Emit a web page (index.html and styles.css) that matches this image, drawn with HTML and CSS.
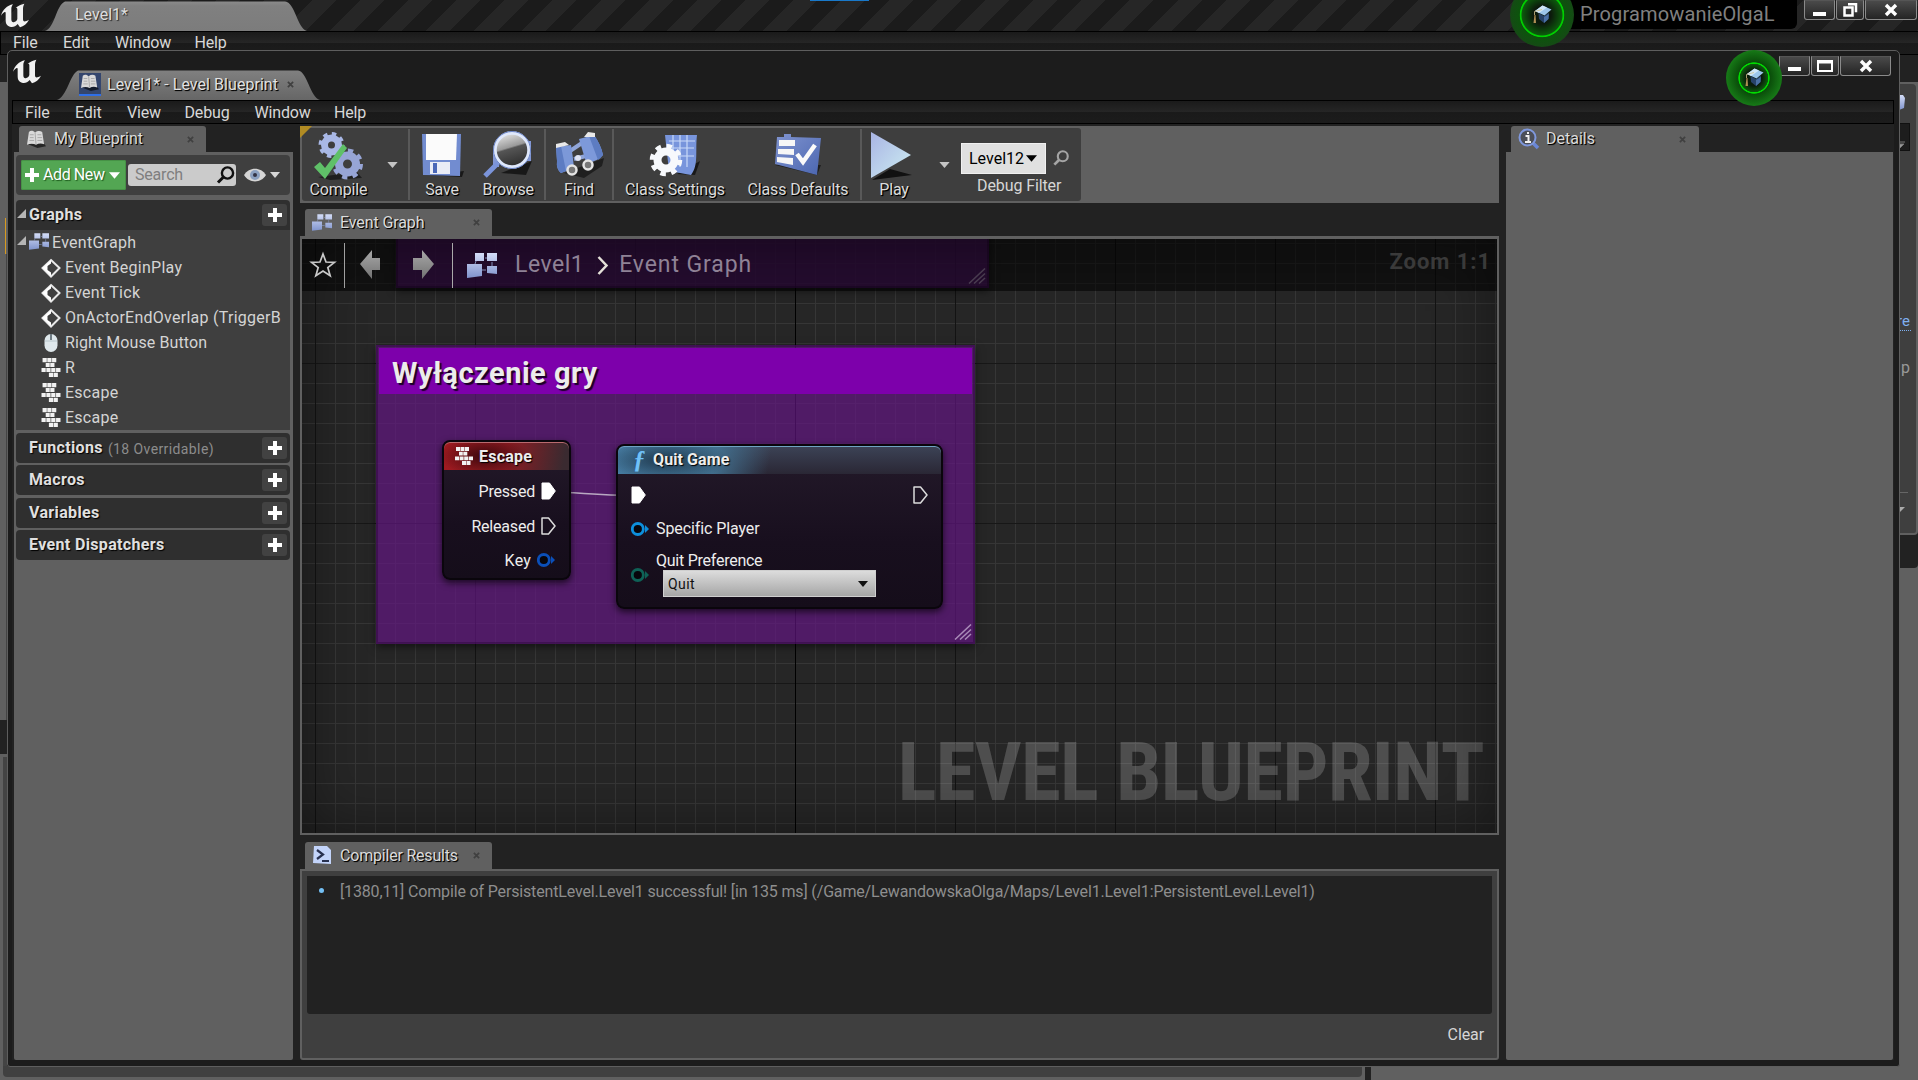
FILE: index.html
```html
<!DOCTYPE html>
<html lang="en">
<head>
<meta charset="utf-8">
<title>Level1* - Level Blueprint</title>
<link rel="stylesheet" href="styles.css">
</head>
<body>
<svg class="defs" width="0" height="0">
  <defs>
    <linearGradient id="gBlue" x1="0" y1="0" x2="0" y2="1"><stop offset="0" stop-color="#d4ddf8"/><stop offset="1" stop-color="#7f93cc"/></linearGradient>
    <linearGradient id="gDeep" x1="0" y1="0" x2="1" y2="1"><stop offset="0" stop-color="#8094d0"/><stop offset="1" stop-color="#4b66b0"/></linearGradient>
    <linearGradient id="gPlay" x1="0" y1="0" x2="1" y2="1"><stop offset="0" stop-color="#a9b4e4"/><stop offset="1" stop-color="#cdeef2"/></linearGradient>
    <linearGradient id="gLens" x1="0" y1="0" x2=".3" y2="1"><stop offset="0" stop-color="#f4f4f4"/><stop offset=".5" stop-color="#9a9a9a"/><stop offset=".55" stop-color="#555"/><stop offset="1" stop-color="#333"/></linearGradient>
    <linearGradient id="gTab" x1="0" y1="0" x2="0" y2="1"><stop offset="0" stop-color="#8b8b8b"/><stop offset=".15" stop-color="#808080"/><stop offset="1" stop-color="#7c7c7c"/></linearGradient>
    <linearGradient id="gTab2" x1="0" y1="0" x2="0" y2="1"><stop offset="0" stop-color="#808080"/><stop offset="1" stop-color="#666"/></linearGradient>
    <linearGradient id="gArrow" x1="0" y1="0" x2="0" y2="1"><stop offset="0" stop-color="#a8a8a8"/><stop offset="1" stop-color="#727272"/></linearGradient>
  </defs>
  <symbol id="unreal" viewBox="0 0 90 90"><path fill="#f2f2f2" d="M3 47C8 29 21 17 39 13C35 18 34 22 34 28V58C34 65 38 68 43 66C48 64 52 60 52 56V28C52 24 50 22 46 24C53 18 62 14 73 11C70 17 69 22 69 28V58C69 66 75 66 87 59C81 71 71 79 60 82L53 72C47 79 38 83 30 80C20 77 17 71 17 60V40C17 33 11 35 3 47Z"/></symbol>
  <symbol id="book" viewBox="0 0 22 20"><path d="M2 15l10 4 9-2-3-4z" fill="#000" opacity=".6"/><path fill="#d9d9d9" d="M3 2C5 0 8 1 9.500 2.500C12 .5 15 .5 17 2L19 15C16 13.500 13 14 10.500 15.500C8 14 4 14 1 15.500z"/><path d="M9.500 2.500L10.500 15M4 5h4M4 8h4M3.500 11h5M12 5h4M12 8h5M12 11h5" stroke="#a6a6a6" stroke-width="1" fill="none"/></symbol>
  <symbol id="graph" viewBox="0 0 30 25"><path d="M9 8L8 11M18 5h2M14 17h5M25 9v4" stroke="#8591bb" fill="none"/><path fill="url(#gBlue)" d="M8 0h9v8H8zM20 0h10v8H20zM0 11h15v12l-15 2zM20 13h10v8l-10-1z"/></symbol>
  <symbol id="plus" viewBox="0 0 14 14"><path fill="#fff" d="M5 0h4v5h5v4H9v5H5V9H0V5h5z"/></symbol>
  <symbol id="close" viewBox="0 0 8 8"><path d="M1 1L7 7M7 1L1 7" stroke="#404040" stroke-width="2"/></symbol>
  <symbol id="down" viewBox="0 0 12 7"><path d="M0 0h12L6 7z" fill="currentColor"/></symbol>
  <symbol id="event" viewBox="0 0 20 20"><path fill="none" stroke="#e8e8e8" stroke-width="2" d="M10 2L18.500 10L10 18.500L1.500 10z"/><path fill="#fff" d="M10 2L1.500 10L10 18v-3.500L6.500 12V8L10 5.500z"/></symbol>
  <symbol id="mouse" viewBox="0 0 20 20"><rect x="3.500" y="1" width="13" height="18" rx="6.500" fill="#dfe8ec"/><path d="M10 1v6" stroke="#6f7c84" stroke-width="2"/><path d="M4 8h12" stroke="#b8c6cc"/></symbol>
  <symbol id="keys" viewBox="0 0 18 18"><path fill="#f2f2f2" d="M1 0h4v4H1zM5.500 0h4v4h-4zM10 0h4v4h-4zM4 4.700h3.800v3.800H4zM8.300 4.700h4v3.800h-4zM0 9.400h4v3.800H0zM4.600 9.400h4v3.800h-4zM9.200 9.400h4v3.800h-4zM13.800 9.400H18v3.800h-4.200zM7 14h4v4H7zM11.500 14h4v4h-4z"/></symbol>
  <symbol id="glass" viewBox="0 0 18 18"><circle cx="11" cy="7" r="5.600" fill="none" stroke="currentColor" stroke-width="2.400"/><path d="M7 11L1.500 16.500" stroke="currentColor" stroke-width="3"/></symbol>
  <symbol id="execOn" viewBox="0 0 15 18"><path fill="#fff" stroke="#fff" stroke-linejoin="round" d="M1 1h7.500L14.300 9L8.500 17H1z"/></symbol>
  <symbol id="execOff" viewBox="0 0 15 18"><path fill="none" stroke="#dcdcdc" stroke-width="1.500" stroke-linejoin="round" d="M1 1h6.500L14 9L7.500 17H1z"/></symbol>
  <symbol id="pin" viewBox="0 0 18 14"><circle cx="6.800" cy="7" r="5.500" fill="#07060c" stroke="currentColor" stroke-width="2.800"/><path fill="currentColor" d="M14 3L18 7L14 11z"/></symbol>
  <symbol id="grip" viewBox="0 0 18 16"><path stroke="currentColor" stroke-width="1.500" d="M1 15.500L17 .5M6 15.500L17 5.500M11 15.500L17 10"/></symbol>
  <symbol id="cap" viewBox="0 0 20 20"><path fill="#274268" d="M6.500 8L12 11L17 7.500L16.500 14L12 18L7 14z"/><path fill="#4a70a4" d="M12 12L16.800 9L16.500 14L12 18z"/><path fill="#9cc6ea" d="M10.500 .5L19.500 4.500L12.500 10.500L3 6z"/><path fill="#cfe6f7" d="M10.500 .5L15 2.500L7 8L3 6z"/><path d="M10 4.500L2.500 6.500V10" stroke="#cfc08c" stroke-width=".8" fill="none"/><path d="M2.500 10L1.500 18H4L3.500 10z" fill="#b08f54"/></symbol>
</svg>

<div class="editor">
  <header class="ed-title">
    <svg class="ed-logo"><use href="#unreal"/></svg>
    <div class="ed-tab">
      <svg class="tab-shape" viewBox="0 0 262 30" preserveAspectRatio="none"><path fill="url(#gTab)" d="M0 30C10 27 11 4 20 0.500H240C250 1 252 27 262 30z"/></svg>
      <span class="t">Level1*</span>
    </div>
    <div class="ed-project"><span>ProgramowanieOlgaL</span></div>
    <div class="tutorial big"><svg width="20" height="20"><use href="#cap"/></svg></div>
    <div class="winbtns ed-btns">
      <i class="w31"><svg width="14" height="14"><path d="M0 9h13v4H0z" fill="#fff"/></svg></i>
      <i class="w28"><svg width="14" height="14"><path d="M5 1.200h8v8M1.500 4.500h8v8h-8z" fill="none" stroke="#fff" stroke-width="2.500"/></svg></i>
      <i class="w51"><svg width="14" height="14"><path d="M2 2L12 12M12 2L2 12" stroke="#fff" stroke-width="3.400"/></svg></i>
    </div>
  </header>
  <nav class="menu ed-menu"><span class="m50">File</span><span class="m52">Edit</span><span class="m80">Window</span><span>Help</span></nav>
  <div class="ed-body">
    <div class="ed-left"><i class="l1"></i><i class="l2"></i><i class="l3"></i><i class="l4"></i><i class="l5"></i><i class="l6"></i></div>
    <div class="ed-right">
      <div class="ed-details">
        <svg class="ed-chip" width="6" height="15"><path d="M0 0h4l2 3-1 10-5 2z" fill="url(#gBlue)"/></svg>
        <div class="ed-drop"><svg width="6" height="7"><path d="M0 0h6M0 7V2h5z" stroke="#777" fill="#999"/></svg></div>
        <div class="ed-link">re</div>
        <div class="ed-word">p</div>
        <div class="ed-rule"></div>
        <svg class="ed-arrow" width="6" height="6"><path d="M0 0h6L0 6z" fill="#aaa"/></svg>
      </div>
    </div>
  </div>
  <footer class="ed-bottom"><div class="ed-content"></div><div class="ed-gap"></div></footer>
  <div class="top-marker"></div>
</div>

<section class="window">
  <header class="w-title">
    <svg class="w-logo"><use href="#unreal"/></svg>
    <div class="w-tab">
      <svg class="tab-shape" viewBox="0 0 263 30" preserveAspectRatio="none"><path fill="url(#gTab2)" d="M0 30C10 27 13 4 21 0.500H241C250 1 253 27 263 30z"/></svg>
      <span class="w-tabicon"><svg width="20" height="18"><use href="#book"/></svg></span>
      <span class="t s">Level1* - Level Blueprint</span>
      <svg class="x" width="7" height="7"><use href="#close"/></svg>
    </div>
    <div class="tutorial"><svg width="20" height="20"><use href="#cap"/></svg></div>
    <div class="winbtns">
      <i class="w31"><svg width="14" height="14"><path d="M0 8h13v4H0z" fill="#fff"/></svg></i>
      <i class="w28"><svg width="16" height="12"><path d="M1 1h14v10H1z" fill="none" stroke="#fff" stroke-width="2"/><path d="M0 2h16" stroke="#fff" stroke-width="3"/></svg></i>
      <i class="w51"><svg width="14" height="14"><path d="M2 2L12 12M12 2L2 12" stroke="#fff" stroke-width="3.400"/></svg></i>
    </div>
  </header>
  <nav class="menu w-menu"><span class="m50">File</span><span class="m52">Edit</span><span class="m58">View</span><span class="m70">Debug</span><span class="m80">Window</span><span>Help</span></nav>

  <div class="columns">
    <aside class="col-left">
      <div class="tab"><svg class="ti" width="21" height="19"><use href="#book"/></svg><span class="t s">My Blueprint</span><svg class="x" width="7" height="7"><use href="#close"/></svg></div>
      <div class="panel bp">
        <div class="bp-tools">
          <button class="add"><svg width="14" height="14"><use href="#plus"/></svg><span>Add New</span><svg width="11" height="7"><use href="#down"/></svg></button>
          <div class="search"><span>Search</span><svg width="19" height="18"><use href="#glass"/></svg></div>
          <svg class="eye" width="22" height="14" viewBox="0 0 22 14"><path d="M0 7C5-1.500 17-1.500 22 7C17 15.500 5 15.500 0 7z" fill="#d6d6d6"/><circle cx="11" cy="7" r="5" fill="#8ba0c0"/><circle cx="11" cy="7" r="2" fill="#334"/></svg>
          <svg class="eye-d" width="10" height="6"><use href="#down"/></svg>
        </div>
        <div class="cat open"><svg class="tri" width="9" height="9"><path d="M9 0V9H0z" fill="#b5b5b5"/></svg><b>Graphs</b><em><svg width="14" height="14"><use href="#plus"/></svg></em></div>
        <ul class="tree">
          <li class="root"><svg class="tri" width="9" height="9"><path d="M9 0V9H0z" fill="#b5b5b5"/></svg><svg width="20" height="17" class="gi"><use href="#graph"/></svg><span>EventGraph</span></li>
          <li><svg width="20" height="20"><use href="#event"/></svg><span>Event BeginPlay</span></li>
          <li><svg width="20" height="20"><use href="#event"/></svg><span>Event Tick</span></li>
          <li><svg width="20" height="20"><use href="#event"/></svg><span>OnActorEndOverlap (TriggerB</span></li>
          <li><svg width="20" height="20"><use href="#mouse"/></svg><span class="n">Right Mouse Button</span></li>
          <li><svg width="20" height="19"><use href="#keys"/></svg><span>R</span></li>
          <li><svg width="20" height="19"><use href="#keys"/></svg><span>Escape</span></li>
          <li><svg width="20" height="19"><use href="#keys"/></svg><span>Escape</span></li>
        </ul>
        <div class="cat"><b>Functions</b><small>(18 Overridable)</small><em><svg width="14" height="14"><use href="#plus"/></svg></em></div>
        <div class="cat"><b>Macros</b><em><svg width="14" height="14"><use href="#plus"/></svg></em></div>
        <div class="cat"><b>Variables</b><em><svg width="14" height="14"><use href="#plus"/></svg></em></div>
        <div class="cat"><b>Event Dispatchers</b><em><svg width="14" height="14"><use href="#plus"/></svg></em></div>
      </div>
    </aside>

    <main class="col-mid">
      <div class="toolbar">
        <div class="tools">
          <div class="tool c1"><svg width="50" height="50" viewBox="0 0 50 50">
            <path d="M4 46l12 3 32-2-5-6z" fill="#000" opacity=".5"/>
            <circle cx="17.500" cy="14" r="7" fill="none" stroke="#a9b8e6" stroke-width="7"/><circle cx="17.500" cy="14" r="11" fill="none" stroke="#a9b8e6" stroke-width="4" stroke-dasharray="4.300 4.340"/>
            <circle cx="33.500" cy="33" r="8.500" fill="none" stroke="#97a5d6" stroke-width="8"/><circle cx="33.500" cy="33" r="13.500" fill="none" stroke="#97a5d6" stroke-width="4" stroke-dasharray="5.300 5.300"/>
            <path d="M0 36L6 31L11 37L29 13L33 17L11 48z" fill="#5fc068"/></svg><label>Compile</label></div>
          <div class="arr a1"><svg width="11" height="6"><use href="#down"/></svg></div>
          <i class="sep"></i>
          <div class="tool c2"><svg width="46" height="50" viewBox="0 0 46 50"><path d="M5 44l38 2 2-6z" fill="#000" opacity=".6"/><path d="M3 3H42L41 45L4 44z" fill="#728cd0"/><path d="M7 3H38L37 29H7z" fill="#fbfbfb"/><path d="M11 31H31V43H11z" fill="#e9ecf6"/><path d="M14 32h4v10h-4z" fill="#4a67b8"/></svg><label>Save</label></div>
          <div class="tool c3"><svg width="50" height="50" viewBox="0 0 50 50"><path d="M18 42l25 2 6-14z" fill="#000" opacity=".6"/><path d="M10 18h6v18h-6zM40 10h8v20h-8z" fill="#8297d4"/><path d="M15 32L2 45" stroke="#7b94da" stroke-width="5"/><circle cx="29" cy="19" r="17" fill="url(#gLens)" stroke="#dfe8fb" stroke-width="3.500"/><circle cx="29" cy="19" r="18.500" fill="none" stroke="#6a84c8" stroke-width="1"/></svg><label>Browse</label></div>
          <i class="sep"></i>
          <div class="tool c4"><svg width="50" height="50" viewBox="0 0 50 50"><path d="M10 42l20 5 18-12 2-8z" fill="#000" opacity=".5"/><path d="M16 20L28 12M20 28L32 25" stroke="#90a5d8" stroke-width="4"/><path d="M2 16L17 14Q19 26 20 37L7 42Q2 38 3 30z" fill="#7c98d8"/><path d="M25 8L40 4Q47 14 49 24Q42 32 32 31z" fill="#7d99da"/><path d="M7 42Q2 38 3 30L2 16L7 15L12 40zM44 29Q47 27 49 24Q47 14 40 4L35 5z" fill="#5d7cc2"/><path d="M2 17v-4l9-2 4 3zM30 6l4-5 7 1v4z" fill="#e9e9e9"/><circle cx="18" cy="39" r="4.500" fill="#777" stroke="#e4e4e4" stroke-width="2.500"/><circle cx="34" cy="34" r="4.500" fill="#777" stroke="#e4e4e4" stroke-width="2.500"/><circle cx="24" cy="27" r="3" fill="#dfe4f4"/></svg><label>Find</label></div>
          <i class="sep"></i>
          <div class="tool c5"><svg width="52" height="50" viewBox="0 0 52 50"><path d="M28 43l18 1 5-14z" fill="#000" opacity=".6"/><path d="M16 4H48C46 20 50 34 42 44L20 40z" fill="#7895dc"/><path d="M20 10H46M20 17H45M24 4V20M31 4V36M38 4V36M20 25H45" stroke="#c9daf8" stroke-width="1.200" fill="none"/><circle cx="17" cy="29" r="8.500" fill="none" stroke="#f7f9fc" stroke-width="8"/><circle cx="17" cy="29" r="14" fill="none" stroke="#f7f9fc" stroke-width="4.500" stroke-dasharray="5.500 5.500"/></svg><label>Class Settings</label></div>
          <div class="tool c6"><svg width="50" height="50" viewBox="0 0 50 50"><path d="M2 34l42 10 4-10z" fill="#000" opacity=".5"/><path d="M4 6L11 6V3H18V6L48 7L44 44L2 33z" fill="url(#gDeep)"/><path d="M6 9H22V15H6zM5 18H21V24L5 23zM4 26L20 27V34L4 31z" fill="#f6f6f6"/><path d="M24 23L30 31L42 14" fill="none" stroke="#fafafa" stroke-width="4.500"/></svg><label>Class Defaults</label></div>
          <i class="sep"></i>
          <div class="tool c7"><svg width="46" height="50" viewBox="0 0 46 50"><path d="M2 49L42 44L20 38z" fill="#111"/><path d="M1 1L41 24L1 47z" fill="url(#gPlay)"/></svg><label>Play</label></div>
          <div class="arr a2"><svg width="11" height="6"><use href="#down"/></svg></div>
          <div class="debug">
            <div class="dbg-row"><span class="dbg-sel">Level12<svg width="11" height="7"><use href="#down"/></svg></span><svg class="dbg-find" width="16" height="16"><use href="#glass"/></svg></div>
            <span class="dbg-label">Debug Filter</span>
          </div>
        </div>
      </div>

      <div class="tab tabm"><svg class="ti" width="20" height="17"><use href="#graph"/></svg><span class="t s">Event Graph</span><svg class="x" width="7" height="7"><use href="#close"/></svg></div>
      <div class="graph">
        <div class="canvas">
          <div class="grid major"></div>
          <div class="comment upper"><svg class="grip" width="18" height="16"><use href="#grip"/></svg></div>
          <div class="comment main"><h2>Wyłączenie gry</h2><svg class="grip" width="18" height="16"><use href="#grip"/></svg></div>
          <svg class="wire" width="90" height="10"><path d="M0 3C30 3 45 6.500 86 6.500" stroke="#b9a9c2" stroke-width="1.600" fill="none"/></svg>
          <div class="node n1">
            <h3><svg width="18" height="18"><use href="#keys"/></svg><span>Escape</span></h3>
            <div class="pr p1"><span>Pressed</span><svg width="15" height="18"><use href="#execOn"/></svg></div>
            <div class="pr p2"><span>Released</span><svg width="15" height="18"><use href="#execOff"/></svg></div>
            <div class="pr p3"><span>Key</span><svg width="18" height="14"><use href="#pin"/></svg></div>
          </div>
          <div class="node n2">
            <h3><i>ƒ</i>Quit Game</h3>
            <div class="q1"><svg width="15" height="18"><use href="#execOn"/></svg><svg width="15" height="18"><use href="#execOff"/></svg></div>
            <div class="q2"><svg width="18" height="14"><use href="#pin"/></svg><span>Specific Player</span></div>
            <div class="q3"><svg width="18" height="14"><use href="#pin"/></svg><div><span>Quit Preference</span><div class="sel">Quit<svg width="10" height="6"><use href="#down"/></svg></div></div></div>
          </div>
          <div class="watermark">LEVEL BLUEPRINT</div>
          <div class="vignette"></div>
          <div class="crumbs">
            <svg class="star" width="26" height="26" viewBox="0 0 26 26"><path d="M13 2L16 10L24.500 10.300L17.800 15.500L20.200 23.800L13 19L5.800 23.800L8.200 15.500L1.500 10.300L10 10z" fill="none" stroke="#c9c9c9" stroke-width="1.700"/></svg>
            <i class="bar b1"></i>
            <svg class="back" width="22" height="30" viewBox="0 0 22 30"><path d="M0 14L12 0V8H20V20H12V29z" fill="url(#gArrow)"/></svg>
            <svg class="fwd" width="22" height="30" viewBox="0 0 22 30"><path d="M22 14L10 0V8H1V20H10V29z" fill="url(#gArrow)"/></svg>
            <i class="bar b2"></i>
            <svg class="cg" width="30" height="25"><use href="#graph"/></svg>
            <span class="cr1">Level1</span>
            <svg class="chev" width="12" height="19" viewBox="0 0 12 19"><path d="M1.500 1L9.500 9.500L1.500 18" fill="none" stroke="#e4e0d8" stroke-width="2.500"/></svg>
            <span class="cr2">Event Graph</span>
            <span class="zoom">Zoom 1:1</span>
          </div>
        </div>
      </div>

      <div class="tab tabm tabc"><svg class="ti" width="19" height="19" viewBox="0 0 19 19"><path d="M1 0H14L18 4V18L0 17z" fill="#c3d4fa"/><path d="M4 4L10 8.500L4 13" stroke="#27304f" stroke-width="2.200" fill="none"/><path d="M9 15h7" stroke="#27304f" stroke-width="2"/></svg><span class="t s">Compiler Results</span><svg class="x" width="7" height="7"><use href="#close"/></svg></div>
      <div class="compiler">
        <div class="log"><i></i><span>[1380,11] Compile of PersistentLevel.Level1 successful! [in 135 ms] (/Game/LewandowskaOlga/Maps/Level1.Level1:PersistentLevel.Level1)</span></div>
        <div class="clear">Clear</div>
      </div>
    </main>

    <aside class="col-right">
      <div class="tab"><svg class="ti" width="22" height="22" viewBox="0 0 22 22"><path d="M14 14L20 20" stroke="#6a87d6" stroke-width="3.500"/><circle cx="9.500" cy="9.500" r="8" fill="#4c4f58" stroke="#7f98dd" stroke-width="2"/><path d="M7.500 8h3v6M7 14h6M9 5h2" stroke="#f0f0f0" stroke-width="2" fill="none"/></svg><span class="t s">Details</span><svg class="x" width="7" height="7"><use href="#close"/></svg></div>
      <div class="panel"></div>
    </aside>
  </div>
</section>
</body>
</html>
```
FILE: styles.css
```css
* { box-sizing: border-box; }
html, body { height: 100%; }
body { margin: 0; width: 1918px; height: 1080px; overflow: hidden; position: relative; background: #222; color: #d6d6d6; font: 16px/20px Roboto, "Liberation Sans", sans-serif; }
.defs { position: absolute; }
svg { display: block; flex: none; overflow: visible; }
i, em { font-style: normal; }
.s { text-shadow: 1px 1px 1px #000, 1px 1px 0 rgba(0,0,0,.7); }

/* main editor, mostly covered by the blueprint window */
.editor { display: flex; flex-direction: column; height: 1080px; position: relative; }
.ed-title { display: flex; height: 31px; background: repeating-linear-gradient(135deg, #1b1b1b 0 17px, #262626 17px 34px); }
.ed-logo { width: 30px; height: 30px; margin-right: 15px; }
.ed-tab { position: relative; width: 262px; height: 30px; margin-top: 1px; padding: 4px 0 0 30px; }
.tab-shape { position: absolute; left: 0; top: 0; width: 100%; height: 100%; }
.t { position: relative; white-space: nowrap; }
.ed-tab .t { color: #dedede; text-shadow: 1px 1px 1px #222; }
.ed-project { margin-left: auto; width: 235px; height: 29px; background: #000; border-radius: 0 0 6px 6px; padding: 4px 0 0 18px; font-size: 20px; letter-spacing: .15px; color: #808080; }
.tutorial { position: absolute; left: 1719px; top: 0; width: 56px; height: 56px; border-radius: 50%; display: flex; align-items: center; justify-content: center; background: radial-gradient(circle, #0a1c0a 0 8px, #0d5a0d 14px, #00dc00 14.500px 15.300px, #0a4d0a 16px, #177a17 28px); }
.tutorial.big { left: 1510px; top: -17px; width: 64px; height: 64px; background: radial-gradient(circle, #0c1a0c 0 9px, #0c5a0c 20px, #00d000 21px 21.800px, #0c540c 22.600px, #154a15 32px); }
.winbtns { display: flex; gap: 1px; }
.winbtns i { height: 20px; border: 1px solid #8a8a8a; border-top-color: #555; border-radius: 0 0 3px 3px; background: linear-gradient(#4a4a4a, #242424); display: flex; align-items: center; justify-content: center; }
.w31 { width: 31px; } .w28 { width: 28px; } .w51 { width: 52px; }
.ed-btns { margin: 0 1px 0 7px; }
.top-marker { position: absolute; left: 810px; top: 0; width: 59px; height: 1px; background: #1979ca; }
.menu { display: flex; flex: none; height: 24px; border: 1px solid #000; background: linear-gradient(#1a1a1a, #262626 50%, #1a1a1a 52%, #1c1c1c); color: #d8d8d8; line-height: 22px; }
.ed-menu { padding-left: 12px; border-right: 0; }
.menu span { flex: none; letter-spacing: -.15px; }
.m50 { width: 50px; } .m52 { width: 52px; } .m58 { width: 57.500px; } .m70 { width: 70px; } .m80 { width: 79.500px; }
.ed-body { flex: 1; display: flex; justify-content: space-between; background: #222; }
.ed-left { width: 7px; background: #606060; display: flex; flex-direction: column; align-items: flex-end; }
.ed-left i { width: 7px; }
.ed-left .l1 { height: 27px; background: #222; }
.ed-left .l2 { height: 136px; }
.ed-left .l3 { height: 36px; width: 1px; margin-right: 1px; background: #d79a20; }
.ed-left .l4 { height: 466px; border-right: 1px solid #444; }
.ed-left .l5 { height: 34px; background: #222; margin-bottom: 3px; }
.ed-left .l6 { flex: 1; width: 4px; background: #444; }
.ed-right { width: 19px; background: #606060; }
.ed-right::before { content: ""; display: block; height: 27px; background: #222; }
.ed-details { height: 453px; background: #3f3f3f; border-top: 2px solid #606060; border-right: 2px solid #606060; border-bottom: 2px solid #606060; border-radius: 0 6px 4px 0; display: flex; flex-direction: column; box-shadow: 0 33px 0 #222; }
.ed-chip { margin-top: 11px; }
.ed-drop { margin-top: 13px; width: 11px; height: 28px; background: #1d1d1d; border: 1px solid #111; border-left: 0; padding-top: 18px; }
.ed-link { margin: 160px 0 0 -2px; width: 14px; height: 20px; font-size: 15px; color: #7fb0f0; border-bottom: 1px dotted #7fb0f0; }
.ed-word { margin: 27px 0 0 2px; width: 10px; color: #999; }
.ed-rule { margin-top: 114px; height: 1px; width: 9px; background: #666; }
.ed-arrow { margin-top: 14px; }
.ed-bottom { height: 14px; display: flex; background: #606060; padding-left: 3px; }
.ed-content { width: 1359px; height: 11px; background: #404040; border-radius: 0 0 4px 4px; }
.ed-gap { margin-left: 3px; width: 6px; background: #222; }

/* blueprint window */
.window { position: absolute; left: 7px; top: 50px; width: 1893px; height: 1017px; border: 1px solid #5e5e5e; border-radius: 5px 5px 3px 3px; background: #1c1c1c; padding: 0 5px 6px 4px; display: flex; flex-direction: column; }
.w-title { position: relative; height: 49px; flex: none; display: flex; }
.w-logo { width: 30px; height: 30px; margin-top: 5px; }
.w-tab { position: relative; width: 263px; height: 30px; margin: 19px 0 0 15px; padding: 1px 0 0 22px; display: flex; align-items: flex-start; }
.w-tabicon { position: relative; width: 22px; height: 23px; margin-top: 2px; background: #34466e; border-bottom: 2px solid #2f6fe8; margin-right: 6px; padding: 1px; }
.w-tab .t { margin-top: 4px; color: #e2e2e2; letter-spacing: .05px; }
.w-tab .x { position: relative; margin: 10px 0 0 9px; }
.w-title .tutorial { left: 1714px; top: -1px; }
.w-title .winbtns { margin: 5px 3px 0 auto; }
.w-title .w51 { width: 51px; }
.w-menu { padding-left: 12px; line-height: 24px; }
.columns { flex: 1; display: flex; background: #222; padding: 2px 1px 0 2px; min-height: 0; }
.col-left { width: 279px; display: flex; flex-direction: column; }
.col-mid { width: 1199px; margin: 0 7px; display: flex; flex-direction: column; }
.col-right { flex: 1; display: flex; flex-direction: column; }
.tab { flex: none; width: 187px; height: 26px; margin-left: 5px; background: #606060; border-radius: 3px 3px 0 0; display: flex; align-items: center; padding: 0 12px 0 7px; }
.tab .ti { margin-right: 7px; }
.tab .t { color: #dcdcdc; margin-top: -1px; }
.tab .x { margin-left: auto; }
.col-right .tab { width: 188px; padding-right: 13px; }
.col-right .tab .ti { margin-right: 6px; }
.panel { flex: 1; background: #606060; border-radius: 0 0 2px 2px; }
.bp { padding: 3px 3px 3px 2px; }
.bp-tools { height: 40px; background: #3f3f3f; border-radius: 4px; display: flex; align-items: center; padding: 0 0 0 5px; }
.add { width: 105px; height: 30px; border: 0; border-radius: 2px; background: #53a653; color: #fff; font: 16px/20px Roboto, sans-serif; letter-spacing: -.4px; display: flex; align-items: center; padding: 0 0 0 4px; gap: 4px; text-shadow: 1px 1px 1px #1c5a1c; box-shadow: inset 0 0 0 1px #469246; }
.search { width: 108px; height: 22px; margin-left: 2px; background: #cbcbcb; border-radius: 3px; display: flex; align-items: center; justify-content: space-between; padding: 0 1px 0 7px; color: #7f7f7f; letter-spacing: -.2px; }
.search svg { color: #111; }
.eye { margin-left: 8px; }
.eye-d { margin-left: 4px; }
.cat { height: 30px; margin-top: 2.500px; background: #2f2f2f; border-radius: 4px; display: flex; align-items: center; padding: 0 3px 0 13px; position: relative; }
.cat.open { margin-top: 5px; padding-left: 1px; border-radius: 4px 4px 0 0; }
.cat b { font-weight: 700; letter-spacing: .35px; color: #e0e0e0; text-shadow: 1px 1px 1px #000; }
.cat .tri { margin: -4px 3px 0 0; }
.cat small { font-size: 14px; letter-spacing: .4px; color: #8c8c8c; margin: 2px 0 0 5px; }
.cat em { margin-left: auto; width: 25px; height: 22px; border-radius: 3px; background: #424242; display: flex; align-items: center; justify-content: center; }
.tree { list-style: none; margin: 0; padding: 0; background: #3f3f3f; height: 200px; }
.tree li { height: 25px; display: flex; align-items: center; padding-left: 25px; white-space: nowrap; letter-spacing: .26px; color: #d4d4d4; }
.tree li span { margin-left: 4px; }
.tree li .n { letter-spacing: .09px; }
.tree .root { padding-left: 1px; }
.tree .root .gi { margin-left: 3px; margin-top: -2px; }
.tree .root span { margin-left: 3px; }
.tree .tri { margin-top: -4px; }

.toolbar { height: 77px; flex: none; background: #606060; padding: 2px; }
.tools { position: relative; width: 779px; height: 73px; background: #3e3e3e; border-radius: 3px; display: flex; align-items: flex-start; }
.tools::before { content: ""; position: absolute; left: -2px; top: -2px; border-top: 12px solid #b18b23; border-right: 12px solid transparent; }
.tool { display: flex; flex-direction: column; align-items: center; height: 73px; padding-top: 3px; }
.tool label { color: #dcdcdc; text-shadow: 1px 1px 1px #000, 1px 1px 0 #000; white-space: nowrap; letter-spacing: -.15px; margin-top: -1px; }
.c1 { width: 73px; } .a1 { width: 33px; } .c2 { width: 65px; padding-right: 1px; } .c3 { width: 69px; padding-right: 3px; } .c4 { width: 66px; } .c5 { width: 122px; } .c6 { width: 124px; } .c7 { width: 64px; } .a2 { width: 36px; }
.c3 label { letter-spacing: -.35px; }
.c7 svg { margin-left: -3px; }
.arr { height: 73px; display: flex; justify-content: center; padding-top: 34px; color: #c4c4c4; }
.a1 { padding-left: 1px; }
.sep { width: 2px; height: 71px; margin-top: 1px; background: #595959; }
.debug { margin-left: -1px; padding-top: 15px; width: 112px; }
.dbg-row { display: flex; align-items: center; }
.dbg-sel { width: 85px; height: 31px; background: #e0e0e0; border: 1px solid #f0f0f0; color: #000; display: flex; align-items: center; padding-left: 7px; gap: 2px; }
.dbg-find { color: #a5a5a5; margin: -2px 0 0 7px; }
.dbg-label { display: block; margin: 2px 0 0 16px; letter-spacing: -.1px; white-space: nowrap; }

.tabm { margin-top: 6px; height: 27px; }
.tabm .ti { margin-right: 8px; }
.tabm .t { margin-top: 1px; letter-spacing: -.1px; }
.graph { height: 599px; flex: none; background: #606060; padding: 3px 2px 2px; }
.canvas { position: relative; height: 594px; overflow: hidden; background-color: #262626;
  background-image: linear-gradient(90deg, #363636 1px, transparent 1px), linear-gradient(#363636 1px, transparent 1px); background-size: 20px 20px; background-position: 13px 0, 0 4px; }
.grid { position: absolute; inset: 0; }
.major { background-image: linear-gradient(90deg, #131313 1px, transparent 1px), linear-gradient(#171717 1px, transparent 1px); background-size: 160px 160px; background-position: 13px 0, 0 124px; }
.major::after { content: ""; position: absolute; left: 493px; top: 0; width: 1px; height: 100%; background: #000; }
.comment { position: absolute; border: 2px solid rgba(70,12,94,.8); background-color: rgba(101,22,135,.66); background-clip: padding-box; box-shadow: 0 3px 8px rgba(0,0,0,.5); color: #a98bb8; }
.comment.main { left: 74px; top: 106px; width: 599px; height: 299px; padding: 1px; }
.comment.upper { left: 94px; top: -120px; width: 593px; height: 169px; }
.comment h2 { margin: 0; height: 46px; background: #7d00ab; color: #ececec; font-size: 29px; line-height: 50px; font-weight: 700; padding-left: 13px; letter-spacing: .5px; text-shadow: 2px 2px 1px #1a0026; }
.grip { position: absolute; right: 1px; bottom: 2px; }
.wire { position: absolute; left: 246px; top: 250px; }
.node { position: absolute; border-radius: 8px; border: 2px solid #0a060c; background: linear-gradient(#241a2a, #180f1e 60%, #150d1a); box-shadow: 0 3px 7px rgba(0,0,0,.65); color: #ededed; }
.node h3 { margin: 0; display: flex; align-items: center; font-size: 16px; line-height: 20px; letter-spacing: .25px; border-radius: 6px 6px 0 0; text-shadow: 1px 1px 1px #000; }
.n1 { left: 140px; top: 201px; width: 129px; height: 140px; display: flex; flex-direction: column; }
.n1 h3 { height: 28px; padding-left: 11px; gap: 6px; background: radial-gradient(ellipse 45px 20px at 40px 14px, rgba(30,0,5,.75), transparent), linear-gradient(100deg, #a01a20, #8e1c22 50%, #3a2a30 95%); box-shadow: inset 0 1px 0 #b96a6e; }
.n1 h3 span { margin-top: 2px; }
.pr { display: flex; align-items: center; justify-content: flex-end; gap: 6px; padding-right: 13px; height: 18px; letter-spacing: -.2px; }
.pr span { padding-top: 1px; }
.p1 { margin-top: 12px; } .p2 { margin-top: 17px; } .p3 { margin-top: 16px; color: #0b4fb8; padding-right: 14px; letter-spacing: .2px; }
.p3 span, .q2 span, .q3 span { color: #ededed; }
.n2 { left: 314px; top: 205px; width: 327px; height: 165px; padding: 0; }
.n2 h3 { height: 28px; padding-left: 13px; letter-spacing: .1px; background: radial-gradient(ellipse 65px 22px at 45px 14px, rgba(15,30,45,.7), transparent), linear-gradient(100deg, #4b84ac 0, #42708f 30%, transparent 47%), linear-gradient(#3c4356, #2a2735); box-shadow: inset 0 1px 0 #6fa3c4; }
.n2 h3 i { width: 22px; font: italic 700 25px/24px "Liberation Serif", serif; color: #6fc1f8; text-shadow: none; padding-left: 2px; }
.q1 { display: flex; justify-content: space-between; padding: 12px 13px 0; }
.q2 { display: flex; align-items: center; gap: 7px; padding-left: 13px; height: 20px; margin-top: 15px; color: #0d8fdc; letter-spacing: -.1px; }
.q3 { display: flex; gap: 7px; padding-left: 13px; margin-top: 13px; color: #0e6156; letter-spacing: -.25px; }
.q3 > svg { margin-top: 16px; }
.q3 span { display: block; height: 18px; line-height: 18px; }
.sel { width: 213px; height: 27px; margin: 0 0 0 7px; background: linear-gradient(#dcdcdc, #a6a6a6); border: 1px solid #cfcfcf; color: #111; font-size: 14px; letter-spacing: .4px; display: flex; align-items: center; justify-content: space-between; padding: 0 7px 0 4px; }
.watermark { position: absolute; right: 13px; top: 486px; font: 700 81px/96px "Roboto Condensed", Roboto, sans-serif; letter-spacing: -.7px; color: rgba(255,255,255,.19); white-space: nowrap; }
.vignette { position: absolute; inset: 0; box-shadow: inset 0 0 60px rgba(0,0,0,.45); pointer-events: none; }
.crumbs { position: absolute; left: 0; top: 0; width: 100%; height: 52px; background: rgba(0,0,0,.55); display: flex; align-items: center; font-size: 23px; line-height: 28px; color: #8f8296; padding-left: 8px; }
.bar { width: 1px; height: 45px; background: #a0a0a0; }
.b1 { margin-left: 8px; } .b2 { margin-left: 18px; background: #aaa; }
.back { margin-left: 15px; } .fwd { margin-left: 30px; }
.cg { margin-left: 14px; }
.cr1 { margin-left: 18px; letter-spacing: .5px; margin-top: -1px; }
.chev { margin: 0 0 0 13px; }
.cr2 { margin-left: 10px; letter-spacing: .9px; margin-top: -1px; }
.zoom { margin: -6px 6px 0 auto; font-size: 22px; font-weight: 700; letter-spacing: .95px; color: #3a3a3a; }

.tabc { margin-top: 7px; }
.tabc .ti { margin: 0 8px 0 1px; }
.tabc .t { letter-spacing: -.2px; margin-top: 0; }
.compiler { height: 191px; flex: none; border: 2px solid #606060; border-radius: 0 0 3px 3px; background: #3f3f3f; padding: 5px 5px 0 5px; }
.log { height: 138px; background: #222; border-radius: 0 0 3px 3px; display: flex; align-items: flex-start; padding: 6px 0 0 12px; color: #8e8e8e; letter-spacing: -.155px; white-space: nowrap; }
.log i { width: 5px; height: 5px; border-radius: 50%; background: #74c0f5; margin: 6px 16px 0 0; }
.clear { text-align: right; padding: 11px 8px 0 0; letter-spacing: -.1px; }
```
